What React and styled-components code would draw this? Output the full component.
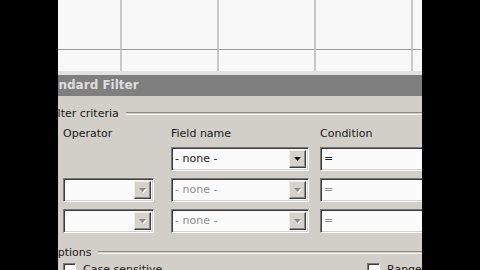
import React from 'react';
import styled, { createGlobalStyle } from 'styled-components';

const GlobalStyle = createGlobalStyle`
  html, body {
    margin: 0;
    padding: 0;
    background: #000;
  }
  body {
    font-family: "DejaVu Sans", Verdana, sans-serif;
    font-size: 11px;
  }
`;

const Screen = styled.div`
  width: 480px;
  height: 270px;
  background: #000;
  display: flex;
  justify-content: center;
`;

const Frame = styled.div`
  width: 364px;
  height: 270px;
  overflow: hidden;
  display: flex;
  flex-direction: column;
  background: #d1cfc7;
`;

const Sheet = styled.div`
  height: 71px;
  flex-shrink: 0;
  display: grid;
  grid-template-columns: 64px 97px 97px 97px 1fr;
  grid-template-rows: 50px 1fr;
  background: #f8f8f8;
`;

const Cell = styled.div`
  border-right: 2px solid ${(p) => (p.$last ? 'transparent' : '#c9c9c9')};
  border-bottom: ${(p) => (p.$top ? '1px solid #9a9a9a' : 'none')};
`;

const Strip = styled.div`
  height: 4px;
  flex-shrink: 0;
  background: #e2e2e0;
`;

const Dialog = styled.div`
  margin-left: -28px;
  display: flex;
  flex-direction: column;
  flex: 1;
`;

const TitleBar = styled.div`
  height: 21px;
  flex-shrink: 0;
  background: #7f7f7f;
  color: #dedede;
  font-weight: bold;
  font-size: 12px;
  line-height: 21px;
  padding-left: 6px;
  white-space: nowrap;
`;

const Body = styled.div`
  padding: 10px 0 0 19px;
  display: flex;
  flex-direction: column;
`;

const LegendRow = styled.div`
  height: 14px;
  display: flex;
  align-items: center;
  color: #1a1a1a;
  white-space: nowrap;
  margin-top: ${(p) => p.$top || 0}px;
`;

const Rule = styled.div`
  flex: 1;
  margin-left: 7px;
  height: 1px;
  border-top: 1px solid #8a8a86;
  border-bottom: 1px solid #f4f4f0;
`;

const Criteria = styled.div`
  margin-top: 7px;
  padding-left: 14px;
  display: grid;
  grid-template-columns: 91px 138px 130px;
  grid-template-rows: 13px 24px 24px 24px;
  column-gap: 17px;
  row-gap: 7px;
  & > :nth-child(3n) {
    margin-left: -6px;
  }
`;

const Label = styled.div`
  color: #1a1a1a;
  line-height: 13px;
  white-space: nowrap;
`;

const Combo = styled.div`
  height: 24px;
  box-sizing: border-box;
  display: flex;
  align-items: stretch;
  background: #fbfbfb;
  border-top: 1px solid #7a7a7a;
  border-left: 1px solid #7a7a7a;
  border-bottom: 1px solid #fdfdfd;
  border-right: 1px solid #fdfdfd;
  box-shadow: inset 1px 1px 0 #3c3c3c, inset -1px -1px 0 #d4d2ca;
  padding: 2px;
`;

const ComboText = styled.div`
  flex: 1;
  padding-left: 1px;
  line-height: 18px;
  color: ${(p) => (p.$disabled ? '#8e8e8e' : '#222')};
  white-space: nowrap;
  overflow: hidden;
`;

const DropButton = styled.div`
  width: 17px;
  flex-shrink: 0;
  box-sizing: border-box;
  background: #d4d2ca;
  border-top: 1px solid #ecebe6;
  border-left: 1px solid #ecebe6;
  border-bottom: 1px solid #404040;
  border-right: 1px solid #404040;
  box-shadow: inset -1px -1px 0 #8a8a86;
  display: flex;
  align-items: center;
  justify-content: center;
`;

const Checks = styled.div`
  margin-top: 4px;
  padding-left: 14px;
  display: grid;
  grid-template-columns: 304px auto;
  white-space: nowrap;
`;

const Check = styled.div`
  display: flex;
  align-items: center;
  gap: 7px;
  color: #1a1a1a;
  line-height: 13px;
`;

const Box = styled.div`
  width: 13px;
  height: 13px;
  box-sizing: border-box;
  background: #fbfbfb;
  border-top: 1px solid #7a7a7a;
  border-left: 1px solid #7a7a7a;
  border-bottom: 1px solid #fdfdfd;
  border-right: 1px solid #fdfdfd;
  box-shadow: inset 1px 1px 0 #3c3c3c;
`;

const Arrow = ({ disabled }) => (
  <svg width="9" height="6" viewBox="0 0 9 6">
    {disabled && <path d="M2 2h7L5.5 6z" fill="#fff" />}
    <path d="M1 1h7L4.5 5z" fill={disabled ? '#8a8a8a' : '#111'} />
  </svg>
);

const ComboBox = ({ value, disabled }) => (
  <Combo>
    <ComboText $disabled={disabled}>{value}</ComboText>
    <DropButton>
      <Arrow disabled={disabled} />
    </DropButton>
  </Combo>
);

const rows = [
  { operator: null, field: '- none -', condition: '=', disabled: false },
  { operator: '', field: '- none -', condition: '=', disabled: true },
  { operator: '', field: '- none -', condition: '=', disabled: true },
];

export default function App() {
  return (
    <>
      <GlobalStyle />
      <Screen>
        <Frame>
          <Sheet>
            {[0, 1, 2, 3, 4].map((i) => (
              <Cell key={`a${i}`} $top $last={i === 4} />
            ))}
            {[0, 1, 2, 3, 4].map((i) => (
              <Cell key={`b${i}`} $last={i === 4} />
            ))}
          </Sheet>
          <Strip />
          <Dialog>
            <TitleBar>Standard Filter</TitleBar>
            <Body>
              <LegendRow>
                Filter criteria
                <Rule />
              </LegendRow>
              <Criteria>
                <Label>Operator</Label>
                <Label>Field name</Label>
                <Label>Condition</Label>
                {rows.map((r, i) => (
                  <React.Fragment key={i}>
                    {r.operator === null ? <div /> : <ComboBox value={r.operator} disabled />}
                    <ComboBox value={r.field} disabled={r.disabled} />
                    <ComboBox value={r.condition} disabled={r.disabled} />
                  </React.Fragment>
                ))}
              </Criteria>
              <LegendRow $top={12}>
                Options
                <Rule />
              </LegendRow>
              <Checks>
                <Check>
                  <Box />
                  Case sensitive
                </Check>
                <Check>
                  <Box />
                  Range contains column labels
                </Check>
              </Checks>
            </Body>
          </Dialog>
        </Frame>
      </Screen>
    </>
  );
}
